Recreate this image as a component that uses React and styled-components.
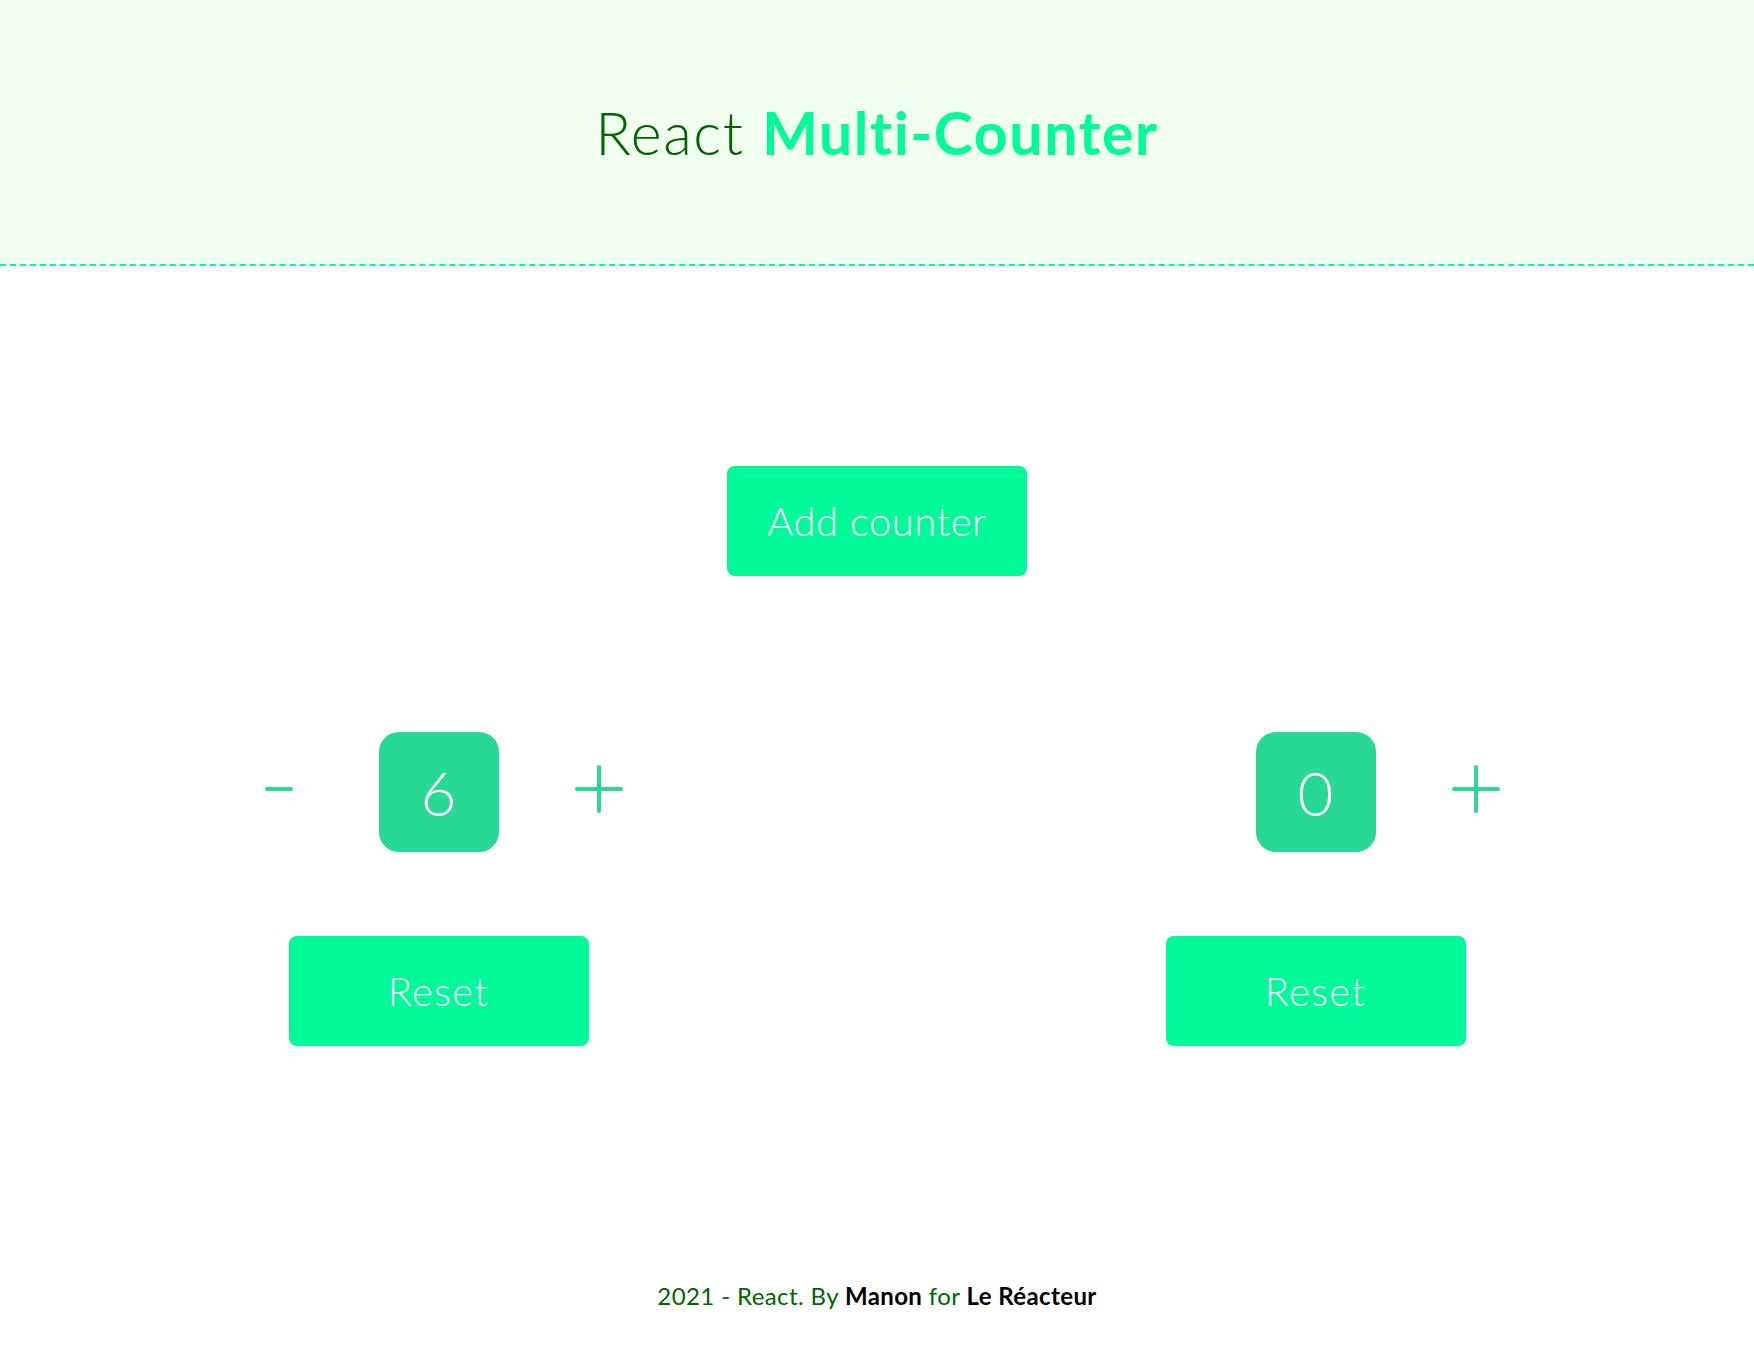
import React, { useState } from "react";
import styled, { createGlobalStyle } from "styled-components";

const GlobalStyle = createGlobalStyle`
  html, body { margin: 0; padding: 0; }
  body {
    font-family: "Lato", "Open Sans", sans-serif;
    background: #ffffff;
  }
  * { box-sizing: border-box; }
`;

const Page = styled.div`
  min-height: 100vh;
  display: flex;
  flex-direction: column;
`;

const Header = styled.header`
  height: 266px;
  background: #f0fff0;
  border-bottom: 2px dashed #00fa9a;
  display: flex;
  align-items: center;
  justify-content: center;
`;

const Title = styled.h1`
  margin: 0;
  font-size: 59px;
  font-weight: 300;
  color: #006400;
  letter-spacing: 1.6px;
`;

const TitleAccent = styled.span`
  font-weight: 700;
  color: #00fa9a;
`;

const Main = styled.main`
  flex: 1;
  display: flex;
  flex-direction: column;
  align-items: center;
  padding-top: 200px;
`;

const PrimaryButton = styled.button`
  width: 300px;
  height: 110px;
  border: none;
  border-radius: 8px;
  background: #00fa9a;
  color: #ffffff;
  font-family: inherit;
  font-size: 40px;
  font-weight: 300;
  letter-spacing: ${(p) => p.$ls || 0.5}px;
  cursor: pointer;
  margin-top: ${(p) => p.$mt || 0}px;
`;

const CounterList = styled.div`
  width: 100%;
  display: flex;
  margin-top: 156px;
`;

const Counter = styled.div`
  flex: 1;
  display: flex;
  flex-direction: column;
  align-items: center;
`;

const Row = styled.div`
  display: flex;
  align-items: center;
  gap: 70px;
`;

const StepButton = styled.button`
  width: 60px;
  height: 60px;
  border: none;
  background: none;
  padding: 0;
  display: flex;
  align-items: center;
  justify-content: center;
  margin-bottom: 6px;
  cursor: pointer;
  visibility: ${(p) => (p.$hidden ? "hidden" : "visible")};
`;

const Display = styled.div`
  width: 120px;
  height: 120px;
  border-radius: 20px;
  background: #27d995;
  color: #ffffff;
  display: flex;
  align-items: center;
  justify-content: center;
  font-size: 62px;
  font-weight: 300;
`;

const Footer = styled.footer`
  height: 102px;
  display: flex;
  align-items: center;
  justify-content: center;
  font-size: 24px;
  font-weight: 400;
  letter-spacing: 0.4px;
  color: #006400;
`;

const Strong = styled.span`
  font-weight: 700;
  color: #000000;
`;

const MinusIcon = () => (
  <svg width="28" height="6" viewBox="0 0 28 6">
    <line x1="2" y1="3" x2="26" y2="3" stroke="#27d995" strokeWidth="4" strokeLinecap="round" />
  </svg>
);

const PlusIcon = () => (
  <svg width="48" height="48" viewBox="0 0 48 48">
    <line x1="2" y1="24" x2="46" y2="24" stroke="#27d995" strokeWidth="4" strokeLinecap="round" />
    <line x1="24" y1="2" x2="24" y2="46" stroke="#27d995" strokeWidth="4" strokeLinecap="round" />
  </svg>
);

export default function App() {
  const [counters, setCounters] = useState([6, 0]);

  const update = (i, v) => setCounters((c) => c.map((x, j) => (j === i ? v : x)));

  return (
    <Page>
      <GlobalStyle />
      <Header>
        <Title>
          React <TitleAccent>Multi-Counter</TitleAccent>
        </Title>
      </Header>
      <Main>
        <PrimaryButton onClick={() => counters.length < 3 && setCounters([...counters, 0])}>
          Add counter
        </PrimaryButton>
        <CounterList>
          {counters.map((value, i) => (
            <Counter key={i}>
              <Row>
                <StepButton $hidden={value === 0} onClick={() => update(i, value - 1)}>
                  <MinusIcon />
                </StepButton>
                <Display>{value}</Display>
                <StepButton onClick={() => update(i, value + 1)}>
                  <PlusIcon />
                </StepButton>
              </Row>
              <PrimaryButton $mt={84} $ls={1.2} onClick={() => update(i, 0)}>
                Reset
              </PrimaryButton>
            </Counter>
          ))}
        </CounterList>
      </Main>
      <Footer>
        <span>
          2021 - React. By <Strong>Manon</Strong> for <Strong>Le Réacteur</Strong>
        </span>
      </Footer>
    </Page>
  );
}
